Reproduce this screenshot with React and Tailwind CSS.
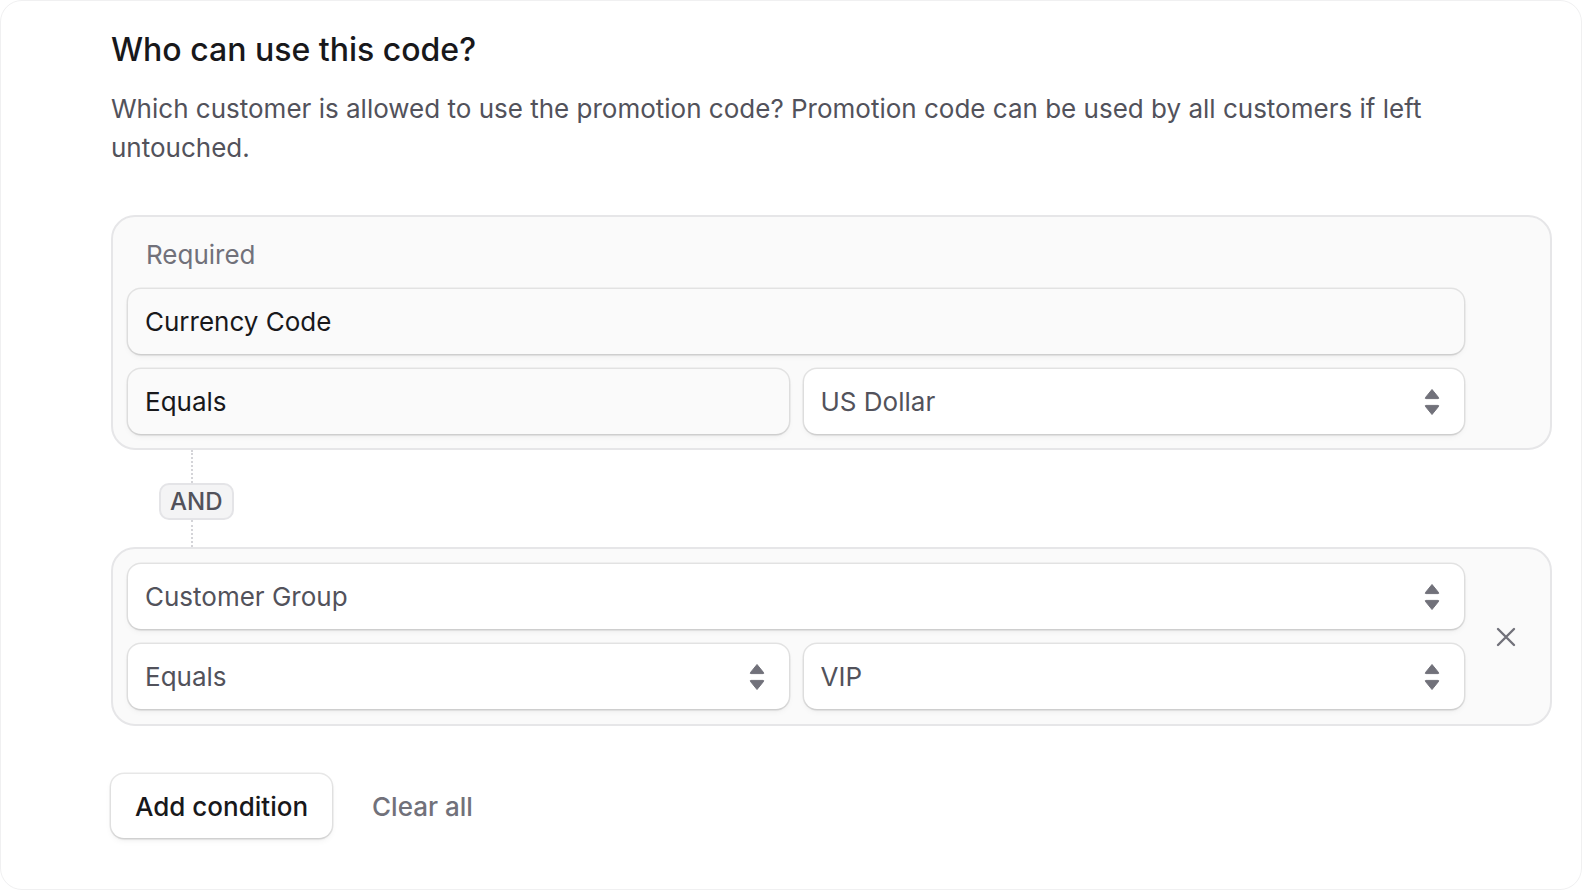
import React from "react";

function Chevrons() {
  return (
    <svg width="18" height="30" viewBox="0 0 18 30" className="shrink-0">
      <path d="M9 2.5 L15.5 10.5 Q16.2 11.6 15 11.6 L3 11.6 Q1.8 11.6 2.5 10.5 Z" fill="#71717a" strokeLinejoin="round" stroke="#71717a" strokeWidth="1" />
      <path d="M9 27.5 L15.5 19.5 Q16.2 18.4 15 18.4 L3 18.4 Q1.8 18.4 2.5 19.5 Z" fill="#71717a" strokeLinejoin="round" stroke="#71717a" strokeWidth="1" />
    </svg>
  );
}

function Field({ children, select, muted, white }) {
  return (
    <div
      className={
        "flex items-center justify-between h-[65px] rounded-[13px] pl-[17px] pr-[23px] text-[26px] shadow-[0_0_0_1.5px_rgba(0,0,0,0.09),0_2px_3px_-1px_rgba(0,0,0,0.10),0_3px_6px_rgba(0,0,0,0.04)] " +
        (white ? "bg-white " : "bg-[#fafafa] ") +
        (muted ? "text-[#52525b]" : "text-[#18181b]")
      }
    >
      <span>{children}</span>
      {select && <Chevrons />}
    </div>
  );
}

export default function App() {
  return (
    <div className="w-full h-screen overflow-hidden bg-white font-['Inter',sans-serif]">
      <div className="h-full rounded-[22px] border border-[#f0f0f1] pl-[110px] pr-[29px] pt-[29px]">
        <h2 className="text-[32px] leading-[40px] font-medium text-[#18181b]">
          Who can use this code?
        </h2>
        <p className="mt-[19px] max-w-[1340px] text-[26px] leading-[39px] text-[#52525b]">
          Which customer is allowed to use the promotion code? Promotion code can be used by all customers if left untouched.
        </p>

        <div className="mt-[48px] rounded-[24px] border-2 border-[#e6e6e8] bg-[#fafafa] pl-[15px] pr-[86px] pt-[17px] pb-[14px]">
          <div className="h-[40px] flex items-center pl-[18px] text-[26px] text-[#71717a]">Required</div>
          <div className="mt-[15px] flex flex-col gap-[15px]">
            <Field>Currency Code</Field>
            <div className="grid grid-cols-2 gap-[15px]">
              <Field>Equals</Field>
              <Field select muted white>US Dollar</Field>
            </div>
          </div>
        </div>

        <div className="ml-[48px] flex flex-col items-start">
          <div className="ml-[32px] h-[33px] border-l-2 border-dotted border-[#d4d4d8]" />
          <div className="h-[37px] px-[9px] rounded-[10px] border-2 border-[#e4e4e7] bg-[#f4f4f5] flex items-center text-[24px] font-medium text-[#52525b]">
            AND
          </div>
          <div className="ml-[32px] h-[27px] border-l-2 border-dotted border-[#d4d4d8]" />
        </div>

        <div className="flex items-center rounded-[24px] border-2 border-[#e6e6e8] bg-[#fafafa] pl-[15px] pr-[15px] pt-[15px] pb-[15px]">
          <div className="flex-1 flex flex-col gap-[15px]">
            <Field select muted white>Customer Group</Field>
            <div className="grid grid-cols-2 gap-[15px]">
              <Field select muted white>Equals</Field>
              <Field select muted white>VIP</Field>
            </div>
          </div>
          <div className="w-[71px] flex justify-end pr-[18px]">
            <svg width="22" height="22" viewBox="0 0 22 22">
              <path d="M3 3 L19 19 M19 3 L3 19" stroke="#71717a" strokeWidth="2.4" strokeLinecap="round" />
            </svg>
          </div>
        </div>

        <div className="mt-[48px] flex items-center gap-[40px]">
          <button className="h-[64px] px-[24px] rounded-[13px] bg-white text-[26px] font-medium text-[#18181b] shadow-[0_0_0_1.5px_rgba(0,0,0,0.09),0_2px_3px_-1px_rgba(0,0,0,0.10),0_3px_6px_rgba(0,0,0,0.05)]">
            Add condition
          </button>
          <button className="text-[26px] font-medium text-[#71717a]">Clear all</button>
        </div>
      </div>
    </div>
  );
}
